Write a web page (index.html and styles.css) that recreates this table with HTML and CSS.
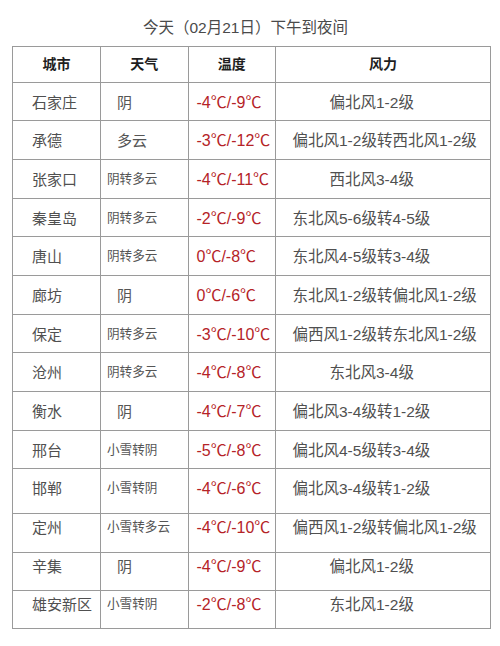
FILE: index.html
```html
<!DOCTYPE html>
<html lang="zh-CN">
<head>
<meta charset="utf-8">
<title>今天（02月21日）下午到夜间</title>
<link rel="stylesheet" href="styles.css">
</head>
<body>
<div class="title">今天（02月21日）下午到夜间</div>
<table class="wx">
  <colgroup>
    <col class="c-city"><col class="c-wx"><col class="c-temp"><col class="c-wind">
  </colgroup>
  <thead>
    <tr><th>城市</th><th>天气</th><th>温度</th><th>风力</th></tr>
  </thead>
  <tbody>
    <tr><td class="city">石家庄</td><td class="sky s">阴</td><td class="temp">-4℃/-9℃</td><td class="wind s">偏北风1-2级</td></tr>
    <tr><td class="city">承德</td><td class="sky s">多云</td><td class="temp">-3℃/-12℃</td><td class="wind">偏北风1-2级转西北风1-2级</td></tr>
    <tr><td class="city">张家口</td><td class="sky">阴转多云</td><td class="temp">-4℃/-11℃</td><td class="wind s">西北风3-4级</td></tr>
    <tr><td class="city">秦皇岛</td><td class="sky">阴转多云</td><td class="temp">-2℃/-9℃</td><td class="wind">东北风5-6级转4-5级</td></tr>
    <tr><td class="city">唐山</td><td class="sky">阴转多云</td><td class="temp">0℃/-8℃</td><td class="wind">东北风4-5级转3-4级</td></tr>
    <tr><td class="city">廊坊</td><td class="sky s">阴</td><td class="temp">0℃/-6℃</td><td class="wind">东北风1-2级转偏北风1-2级</td></tr>
    <tr><td class="city">保定</td><td class="sky">阴转多云</td><td class="temp">-3℃/-10℃</td><td class="wind">偏西风1-2级转东北风1-2级</td></tr>
    <tr><td class="city">沧州</td><td class="sky">阴转多云</td><td class="temp">-4℃/-8℃</td><td class="wind s">东北风3-4级</td></tr>
    <tr><td class="city">衡水</td><td class="sky s">阴</td><td class="temp">-4℃/-7℃</td><td class="wind">偏北风3-4级转1-2级</td></tr>
    <tr><td class="city">邢台</td><td class="sky">小雪转阴</td><td class="temp">-5℃/-8℃</td><td class="wind">偏北风4-5级转3-4级</td></tr>
    <tr class="tall"><td class="city">邯郸</td><td class="sky">小雪转阴</td><td class="temp">-4℃/-6℃</td><td class="wind">偏北风3-4级转1-2级</td></tr>
    <tr class="raised"><td class="city">定州</td><td class="sky">小雪转多云</td><td class="temp">-4℃/-10℃</td><td class="wind">偏西风1-2级转偏北风1-2级</td></tr>
    <tr class="raised"><td class="city">辛集</td><td class="sky s">阴</td><td class="temp">-4℃/-9℃</td><td class="wind s">偏北风1-2级</td></tr>
    <tr class="raised"><td class="city">雄安新区</td><td class="sky">小雪转阴</td><td class="temp">-2℃/-8℃</td><td class="wind s">东北风1-2级</td></tr>
  </tbody>
</table>
</body>
</html>
```

FILE: styles.css
```css
html, body {
  margin: 0;
  padding: 0;
  background: #ffffff;
}

body {
  font-family: "Liberation Sans", "Noto Sans CJK SC", sans-serif;
  color: #505050;
}

.title {
  height: 46px;
  box-sizing: border-box;
  padding: 17px 9px 0 0;
  font-size: 15.5px;
  line-height: 21px;
  text-align: center;
  color: #4a4a4a;
  white-space: nowrap;
}

.wx {
  border-collapse: collapse;
  table-layout: fixed;
  width: 478px;
  margin-left: 12px;
}

.c-city { width: 88px; }
.c-wx { width: 87.5px; }
.c-temp { width: 87.5px; }
.c-wind { width: 215px; }

.wx th,
.wx td {
  border: 1px solid #9a9a9a;
  padding: 0;
  white-space: nowrap;
  overflow: hidden;
}

.wx thead tr {
  height: 35.7px;
}

.wx th {
  font-size: 14px;
  font-weight: bold;
  color: #1e1e1e;
  text-align: center;
  vertical-align: middle;
  line-height: 20px;
}

.wx tbody tr {
  height: 38.66px;
}

.wx tbody tr.tall {
  height: 45px;
}

.wx tbody tr.raised {
  height: 38.33px;
}

.wx td {
  vertical-align: top;
  text-align: left;
  line-height: 21px;
  padding-top: 9px;
}

.wx tr.raised td {
  padding-top: 3px;
}

.wx td.city {
  font-size: 15px;
  padding-left: 19px;
}

.wx td.sky {
  font-size: 12.6px;
  padding-left: 6px;
  color: #555555;
}

.wx td.sky.s {
  font-size: 15px;
  padding-left: 16px;
}

.wx td.temp {
  font-size: 16px;
  padding-left: 8px;
  color: #b52327;
}

.wx td.wind {
  font-size: 15.5px;
  padding-left: 16.5px;
}

.wx td.wind.s {
  padding-left: 53.5px;
}
```
